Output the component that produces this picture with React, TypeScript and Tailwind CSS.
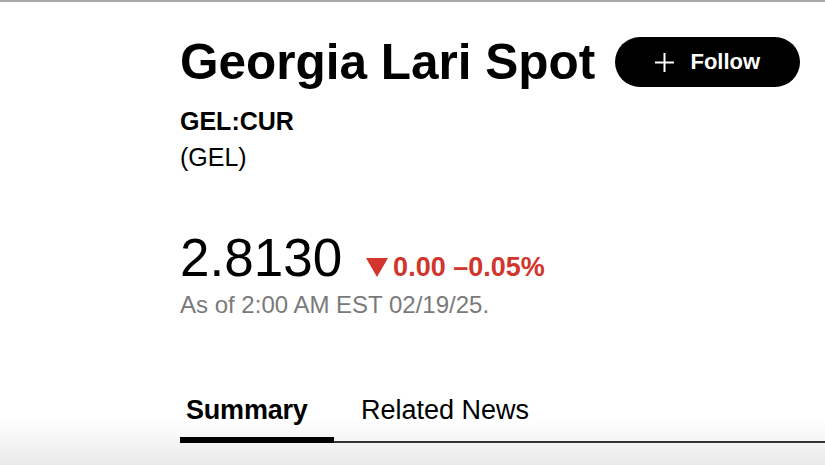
import React from 'react';

const FONT = { fontFamily: '"Liberation Sans", Arial, Helvetica, sans-serif' };

const Tabs: React.FC = () => {
  return (
    <div className="flex items-end mt-[76px]">
      <div className="w-[154px] pl-[6px] pb-[12px] border-b-[6px] border-black text-[27px] leading-[30px] font-bold text-black tracking-[-0.2px]">
        Summary
      </div>
      <div className="pl-[27px] pr-[20px] pb-[16px] border-b-2 border-[#333] text-[27px] leading-[30px] text-black">
        Related News
      </div>
      <div className="flex-1 border-b-2 border-[#333]" />
    </div>
  );
};

export default function App() {
  return (
    <div
      className="w-full h-[465px] overflow-hidden border-t-2 border-[#a9a9a9] bg-[linear-gradient(to_bottom,#ffffff_0px,#ffffff_418px,#e9e9e9_463px)]"
      style={FONT}
    >
      <div className="pl-[180px] pt-[35px]">
        <div className="flex items-center gap-[20px]">
          <h1 className="text-[49.5px] leading-[50px] font-bold text-black">
            Georgia Lari Spot
          </h1>
          <button className="flex items-center justify-center gap-[16px] w-[185px] h-[50px] rounded-full bg-black text-white">
            <svg width="19" height="19" viewBox="0 0 19 19" fill="none" stroke="currentColor" strokeWidth="2">
              <path d="M0 9.5h19M9.5 0v19" />
            </svg>
            <span className="text-[22px] leading-none font-bold">Follow</span>
          </button>
        </div>

        <div className="mt-[20px] text-[25px] leading-[28px] font-bold text-black">GEL:CUR</div>
        <div className="mt-[8px] text-[25px] leading-[28px] text-black">(GEL)</div>

        <div className="mt-[61px] flex items-baseline">
          <span className="text-[53px] leading-[52px] text-black">2.8130</span>
          <span className="ml-[24px] flex items-baseline text-[#d1352c] font-bold text-[27px] leading-[30px]">
            <svg width="22" height="19" viewBox="0 0 22 19" className="self-center mt-[1px]">
              <path d="M0 0h22L11 19z" fill="#d1352c" />
            </svg>
            <span className="ml-[5px]">0.00 –0.05%</span>
          </span>
        </div>
        <div className="mt-[7px] text-[24px] leading-[28px] text-[#7a7a7a]">As of 2:00 AM EST 02/19/25.</div>

        <Tabs />
      </div>
    </div>
  );
}
